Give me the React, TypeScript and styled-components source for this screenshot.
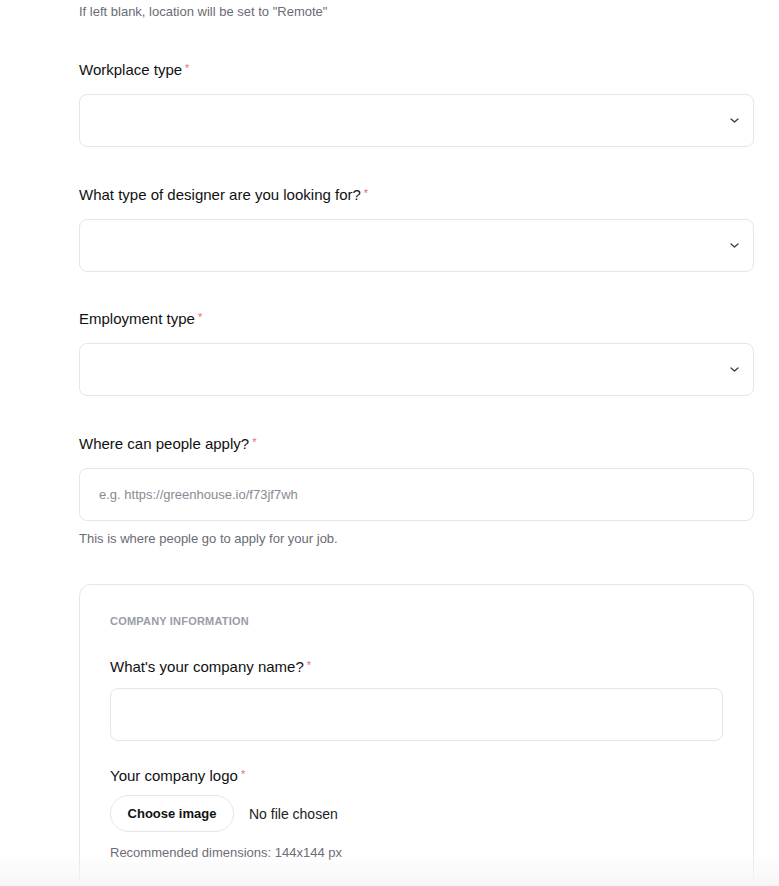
import React from "react";
import styled, { createGlobalStyle } from "styled-components";

const Global = createGlobalStyle`
  html, body { margin: 0; padding: 0; background: #fff; }
  body { font-family: "Liberation Sans", Arial, sans-serif; color: #111; }
  * { box-sizing: border-box; }
`;

const Page = styled.div`
  padding: 0 25px 0 79px;
  width: 779px;
`;

const Form = styled.div`
  display: flex;
  flex-direction: column;
`;

const TopHelp = styled.p`
  margin: 4px 0 0;
  font-size: 13px;
  line-height: 16px;
  color: #6b6b76;
`;

const Field = styled.div<{ $mt: number }>`
  display: flex;
  flex-direction: column;
  margin-top: ${(p) => p.$mt}px;
`;

const Label = styled.label<{ $mb?: number }>`
  font-size: 15px;
  line-height: 18px;
  color: #111;
  margin-bottom: ${(p) => p.$mb ?? 15}px;
`;

const Req = styled.span`
  color: #ef6b6b;
  font-size: 11px;
  vertical-align: top;
  margin-left: 3px;
  position: relative;
  top: -2px;
`;

const Box = styled.div`
  height: 53px;
  border: 1px solid #e6e6e9;
  border-radius: 8px;
  background: #fff;
  display: flex;
  align-items: center;
  justify-content: space-between;
  padding: 0 14px 0 19px;
`;

const Placeholder = styled.span`
  font-size: 13px;
  color: #8a8a94;
`;

const Help = styled.p<{ $mt?: number }>`
  margin: ${(p) => p.$mt ?? 10}px 0 0;
  font-size: 13px;
  line-height: 16px;
  color: #6b6b76;
`;

const Card = styled.div`
  margin-top: 37px;
  border: 1px solid #e6e6e9;
  border-radius: 12px;
  padding: 29px 30px 40px;
  display: flex;
  flex-direction: column;
`;

const CardTitle = styled.div`
  font-size: 11px;
  font-weight: bold;
  letter-spacing: 0.2px;
  color: #9a9ca8;
  line-height: 14px;
`;

const FileRow = styled.div`
  display: flex;
  align-items: center;
  gap: 15px;
`;

const FileButton = styled.button`
  height: 37px;
  width: 124px;
  border: 1px solid #e6e6e9;
  border-radius: 19px;
  background: #fff;
  font-family: "Liberation Sans", Arial, sans-serif;
  font-size: 13px;
  font-weight: bold;
  color: #111;
  padding: 0;
`;

const FileText = styled.span`
  font-size: 14px;
  color: #222;
`;

const Fade = styled.div`
  position: fixed;
  left: 0;
  right: 0;
  bottom: 0;
  height: 32px;
  background: linear-gradient(to bottom, rgba(247,247,247,0), #f6f6f6);
  pointer-events: none;
`;

const Chevron = () => (
  <svg width="9" height="5" viewBox="0 0 9 5" fill="none">
    <path d="M1 1l3.5 3 3.5-3" stroke="#3a3a48" strokeWidth="1.3" strokeLinecap="round" strokeLinejoin="round" />
  </svg>
);

const SelectField = ({ label, mt }: { label: string; mt: number }) => (
  <Field $mt={mt}>
    <Label>
      {label}
      <Req>*</Req>
    </Label>
    <Box>
      <span />
      <Chevron />
    </Box>
  </Field>
);

export default function App() {
  return (
    <>
      <Global />
      <Page>
        <Form>
          <TopHelp>If left blank, location will be set to "Remote"</TopHelp>
          <SelectField label="Workplace type" mt={41} />
          <SelectField label="What type of designer are you looking for?" mt={39} />
          <SelectField label="Employment type" mt={38} />
          <Field $mt={39}>
            <Label>
              Where can people apply?
              <Req>*</Req>
            </Label>
            <Box>
              <Placeholder>e.g. https://greenhouse.io/f73jf7wh</Placeholder>
            </Box>
            <Help>This is where people go to apply for your job.</Help>
          </Field>
          <Card>
            <CardTitle>COMPANY INFORMATION</CardTitle>
            <Field $mt={30}>
              <Label $mb={12}>
                What's your company name?
                <Req>*</Req>
              </Label>
              <Box />
            </Field>
            <Field $mt={26}>
              <Label $mb={10}>
                Your company logo
                <Req>*</Req>
              </Label>
              <FileRow>
                <FileButton>Choose image</FileButton>
                <FileText>No file chosen</FileText>
              </FileRow>
              <Help $mt={13}>Recommended dimensions: 144x144 px</Help>
            </Field>
          </Card>
        </Form>
      </Page>
      <Fade />
    </>
  );
}
